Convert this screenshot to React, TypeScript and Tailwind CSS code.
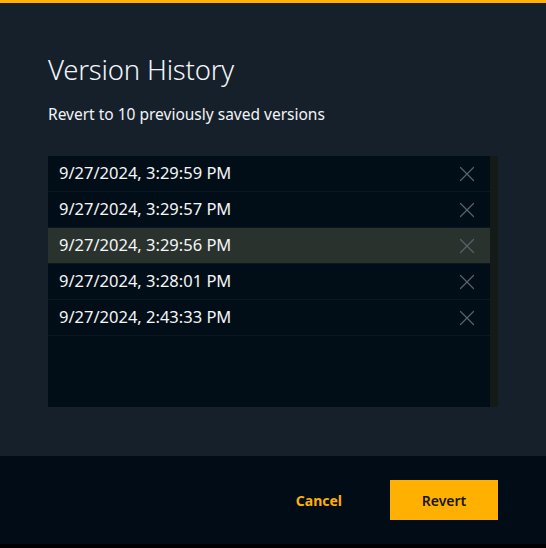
import { X } from "lucide-react";

const versions = [
  "9/27/2024, 3:29:59 PM",
  "9/27/2024, 3:29:57 PM",
  "9/27/2024, 3:29:56 PM",
  "9/27/2024, 3:28:01 PM",
  "9/27/2024, 2:43:33 PM",
];

export default function App() {
  const selected = 2;
  return (
    <div
      className="w-[546px] h-[548px] flex flex-col bg-[#15202a] overflow-hidden"
      style={{ fontFamily: '"Noto Sans", "Open Sans", sans-serif' }}
    >
      <div className="h-[3px] bg-[#ffb000] shrink-0" />
      <div className="flex-1 px-12 pt-[47px]">
        <h1 className="text-[27.5px] font-light text-[#f2f4f8] leading-[40px] tracking-[-0.2px]">
          Version History
        </h1>
        <p className="mt-[14px] text-[15.5px] text-[#f2f4f8] leading-[20px]">
          Revert to 10 previously saved versions
        </p>
        <div className="mt-[32px] flex h-[251px]">
          <ul className="w-[442px] bg-[#020e17]">
            {versions.map((v, i) => (
              <li
                key={v}
                className={`h-[36px] flex items-center justify-between pl-[11px] pr-[10px] border-b border-[#0c1721] ${
                  i === selected ? "bg-[#2a322d]" : ""
                }`}
              >
                <span className="text-[16.5px] text-[#f4f6f8]">{v}</span>
                <X size={26} strokeWidth={1.1} className="text-[#58626a]" />
              </li>
            ))}
          </ul>
          <div className="w-[8px] bg-[#141a17]" />
        </div>
      </div>
      <div className="h-[88px] bg-[#020c16] flex items-center justify-end pr-[48px] shrink-0">
        <button className="text-[14px] font-bold text-[#ffb000] mr-[48px] px-0">
          Cancel
        </button>
        <button className="w-[108px] h-[40px] bg-[#ffb000] text-[14px] font-semibold text-[#161616]">
          Revert
        </button>
      </div>
      <div className="h-[4px] bg-[#000000] shrink-0" />
    </div>
  );
}
